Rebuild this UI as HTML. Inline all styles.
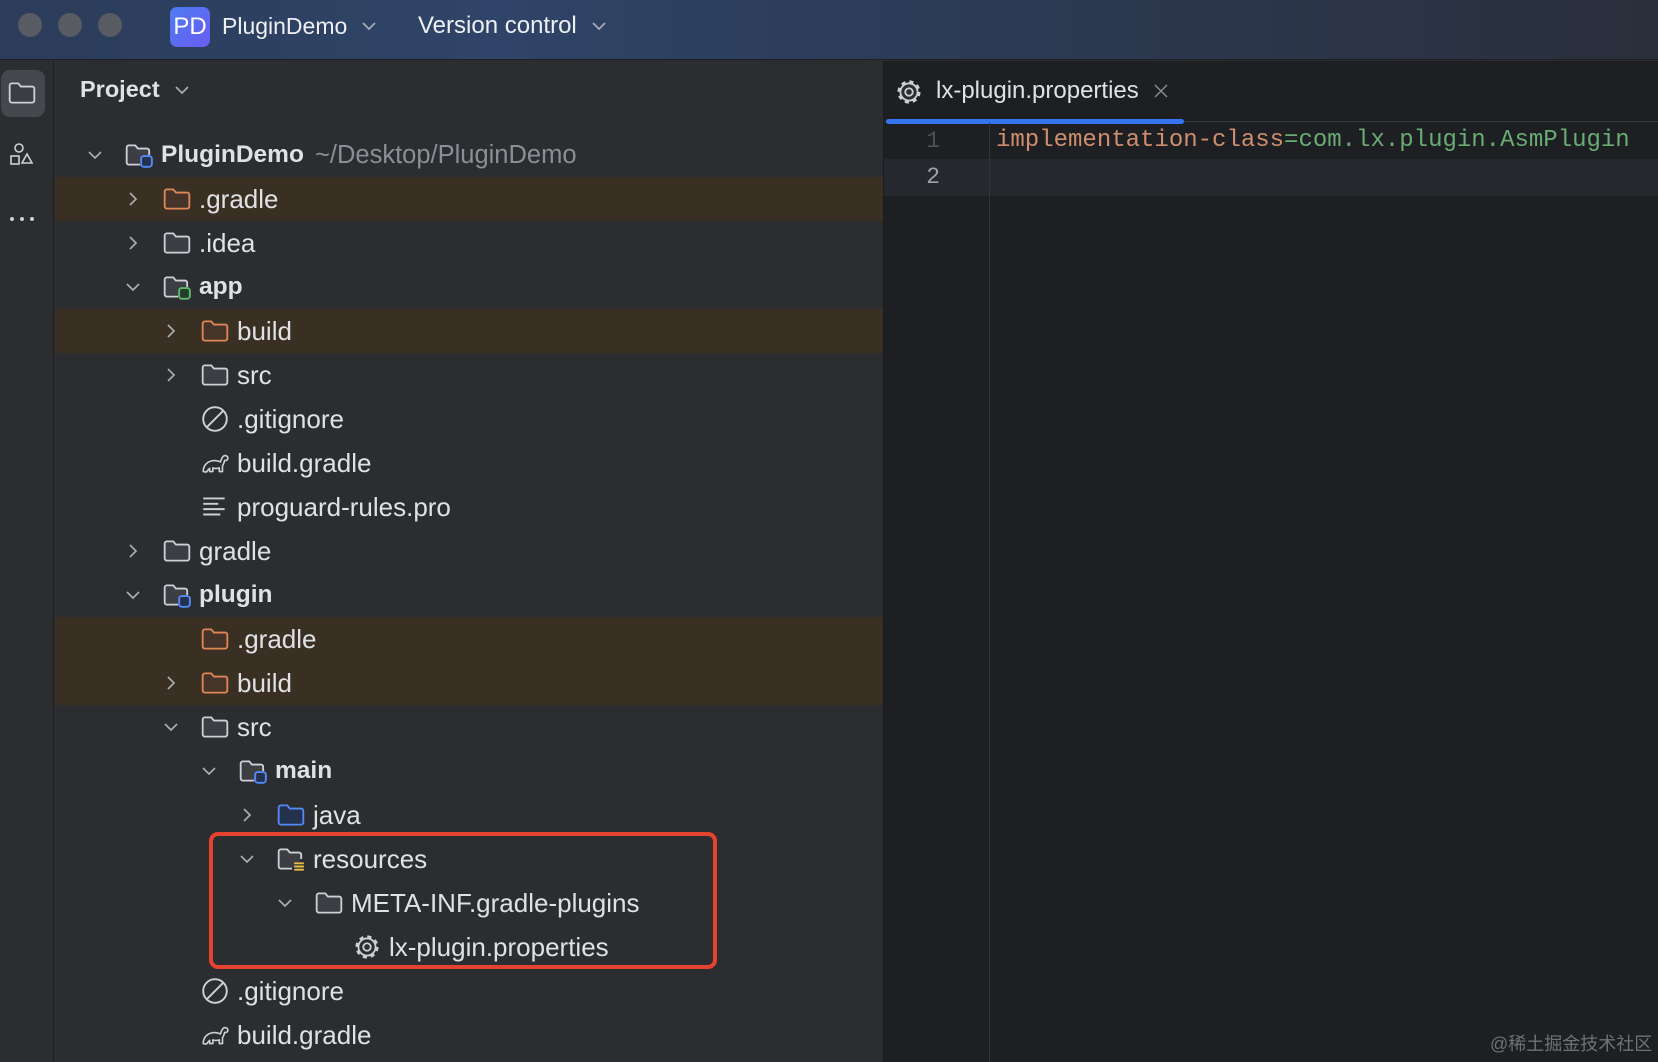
<!DOCTYPE html>
<html><head><meta charset="utf-8">
<style>
*{margin:0;padding:0;box-sizing:border-box}
body{width:1658px;height:1062px;overflow:hidden;background:#2b2d30;font-family:"Liberation Sans",sans-serif;position:relative;color:#dfe1e5}
.title{position:absolute;left:0;top:0;width:1658px;height:60px;background:linear-gradient(90deg,#2c3c5a 0%,#2f4468 30%,#2c3a54 60%,#2a2f3b 100%);border-bottom:1px solid #1e1f22}
.tl{position:absolute;top:13px;width:24px;height:24px;border-radius:50%;background:#585b61}
.strip{position:absolute;left:0;top:61px;width:54px;height:1001px;background:#2b2d30;border-right:1px solid #1e1f22}
.panel{position:absolute;left:55px;top:61px;width:828px;height:1001px;background:#2b2d30}
.editor{position:absolute;left:883px;top:61px;width:775px;height:1001px;background:#1e1f22;border-left:1px solid #1a1b1d}
.row{position:absolute;left:55px;width:828px;height:44px}
.row.o{background:#3a2f23}
.row svg{position:absolute}
.row .c{top:13px;width:18px;height:18px}
.row .i{top:7px;width:30px;height:30px}
.row span{position:absolute;top:0;line-height:44px;font-size:26px;color:#dfe1e5;white-space:nowrap}
.row span.b{font-weight:bold;font-size:24.5px}
</style></head><body>
<svg width="0" height="0" style="position:absolute">
<defs>
<symbol id="cd" viewBox="0 0 18 18"><path d="M3 6l6 6 6-6" fill="none" stroke="#a8abb2" stroke-width="1.7"/></symbol>
<symbol id="cr" viewBox="0 0 18 18"><path d="M6 3l6 6-6 6" fill="none" stroke="#a8abb2" stroke-width="1.7"/></symbol>
<symbol id="fg" viewBox="0 0 28 28"><path d="M2.5 7a2 2 0 0 1 2-2h6l2.5 3h10.5a2 2 0 0 1 2 2v11a2 2 0 0 1-2 2h-19a2 2 0 0 1-2-2z" fill="#3c3e43" stroke="#ced0d6" stroke-width="1.7"/></symbol>
<symbol id="fo" viewBox="0 0 28 28"><path d="M2.5 7a2 2 0 0 1 2-2h6l2.5 3h10.5a2 2 0 0 1 2 2v11a2 2 0 0 1-2 2h-19a2 2 0 0 1-2-2z" fill="#45342a" stroke="#e08855" stroke-width="1.7"/></symbol>
<symbol id="fb" viewBox="0 0 28 28"><path d="M2.5 7a2 2 0 0 1 2-2h6l2.5 3h10.5a2 2 0 0 1 2 2v11a2 2 0 0 1-2 2h-19a2 2 0 0 1-2-2z" fill="#25324d" stroke="#548af7" stroke-width="1.7"/></symbol>
<symbol id="mb" viewBox="0 0 28 28"><path d="M15 23H4.5a2 2 0 0 1-2-2V7a2 2 0 0 1 2-2h6l2.5 3h8.5a2 2 0 0 1 2 2v4" fill="#3c3e43" stroke="#ced0d6" stroke-width="1.7"/><rect x="16" y="15" width="10" height="10" rx="2.5" fill="#25324d" stroke="#548af7" stroke-width="1.8"/></symbol>
<symbol id="mg" viewBox="0 0 28 28"><path d="M15 23H4.5a2 2 0 0 1-2-2V7a2 2 0 0 1 2-2h6l2.5 3h8.5a2 2 0 0 1 2 2v4" fill="#3c3e43" stroke="#ced0d6" stroke-width="1.7"/><rect x="16" y="15" width="10" height="10" rx="2.5" fill="#253c30" stroke="#5fb865" stroke-width="1.8"/></symbol>
<symbol id="mr" viewBox="0 0 28 28"><path d="M15 23H4.5a2 2 0 0 1-2-2V7a2 2 0 0 1 2-2h6l2.5 3h8.5a2 2 0 0 1 2 2v4" fill="#3c3e43" stroke="#ced0d6" stroke-width="1.7"/><path d="M17 18h9M17 21h9M17 24h9" stroke="#e8c046" stroke-width="1.8"/></symbol>
<symbol id="gi" viewBox="0 0 28 28"><circle cx="14" cy="14" r="11" fill="none" stroke="#ced0d6" stroke-width="1.8"/><path d="M6.5 21.5l15-15" stroke="#ced0d6" stroke-width="1.8"/></symbol>
<symbol id="gr" viewBox="0 0 28 28"><path d="M3 22c0-5 3-9 8-10 3-.6 6 0 8 1 1-2 1-4 3-5.5 1.5-1 4 0 4 2 0 2-2 2.5-3 2-.5 2-1 4-2 5v5.5h-3v-3.5c-2 .8-4 .8-6 0v3.5H9v-3c-1 1-2 2-3 3.5z" fill="none" stroke="#ced0d6" stroke-width="1.5" stroke-linejoin="round"/></symbol>
<symbol id="pr" viewBox="0 0 28 28"><path d="M3 6h20M3 11h14M3 16h20M3 21h16" stroke="#ced0d6" stroke-width="1.8"/></symbol>
<symbol id="ge" viewBox="0 0 28 28"><circle cx="14" cy="14" r="9" fill="none" stroke="#ced0d6" stroke-width="3.6" stroke-dasharray="3.6 3.47"/><circle cx="14" cy="14" r="8" fill="#2b2d30" stroke="#ced0d6" stroke-width="1.7"/><circle cx="14" cy="14" r="3.5" fill="none" stroke="#ced0d6" stroke-width="1.7"/></symbol>
</defs></svg>

<div class="title">
<div class="tl" style="left:18px"></div><div class="tl" style="left:58px"></div><div class="tl" style="left:98px"></div>
<div style="position:absolute;left:170px;top:7px;width:40px;height:40px;border-radius:7px;background:linear-gradient(135deg,#4c7cf3,#6b5cf0);color:#fff;font-size:24px;line-height:40px;text-align:center">PD</div>
<div style="position:absolute;left:222px;top:0;line-height:52px;font-size:23px;color:#eef0f4">PluginDemo</div>
<svg style="position:absolute;left:360px;top:17px" width="18" height="18"><use href="#cd"/></svg>
<div style="position:absolute;left:418px;top:0;line-height:52px;font-size:24px;color:#eef0f4">Version control</div>
<svg style="position:absolute;left:590px;top:17px" width="18" height="18"><use href="#cd"/></svg>
</div>

<div class="strip">
<div style="position:absolute;left:1px;top:9px;width:44px;height:47px;border-radius:9px;background:#45474c"></div>
<svg style="position:absolute;left:7px;top:17px" width="30" height="30"><use href="#fg"/></svg>
<svg style="position:absolute;left:8px;top:80px" width="28" height="28" viewBox="0 0 28 28"><circle cx="11" cy="7" r="4" fill="none" stroke="#ced0d6" stroke-width="1.6"/><rect x="3" y="15" width="8" height="8" fill="none" stroke="#ced0d6" stroke-width="1.6"/><path d="M19 13l5 9h-10z" fill="none" stroke="#ced0d6" stroke-width="1.6"/></svg>
<div style="position:absolute;left:10px;top:156px;width:4px;height:4px;border-radius:50%;background:#ced0d6;box-shadow:10px 0 #ced0d6,20px 0 #ced0d6"></div>
</div>

<div class="panel">
<div style="position:absolute;left:25px;top:15px;font-size:23.5px;font-weight:bold;color:#dfe1e5">Project</div>
<svg style="position:absolute;left:118px;top:20px" width="18" height="18"><use href="#cd"/></svg>
</div>

<div class="row" style="top:133px"><svg class="c" style="left:31px"><use href="#cd"/></svg><svg class="i" style="left:69px"><use href="#mb"/></svg><span class="b" style="left:106px">PluginDemo</span><span style="left:260px;color:#8b8e94;font-size:25.5px">~/Desktop/PluginDemo</span></div>
<div class="row o" style="top:177px"><svg class="c" style="left:69px"><use href="#cr"/></svg><svg class="i" style="left:107px"><use href="#fo"/></svg><span style="left:144px">.gradle</span></div>
<div class="row" style="top:221px"><svg class="c" style="left:69px"><use href="#cr"/></svg><svg class="i" style="left:107px"><use href="#fg"/></svg><span style="left:144px">.idea</span></div>
<div class="row" style="top:265px"><svg class="c" style="left:69px"><use href="#cd"/></svg><svg class="i" style="left:107px"><use href="#mg"/></svg><span class="b" style="left:144px">app</span></div>
<div class="row o" style="top:309px"><svg class="c" style="left:107px"><use href="#cr"/></svg><svg class="i" style="left:145px"><use href="#fo"/></svg><span style="left:182px">build</span></div>
<div class="row" style="top:353px"><svg class="c" style="left:107px"><use href="#cr"/></svg><svg class="i" style="left:145px"><use href="#fg"/></svg><span style="left:182px">src</span></div>
<div class="row" style="top:397px"><svg class="i" style="left:145px"><use href="#gi"/></svg><span style="left:182px">.gitignore</span></div>
<div class="row" style="top:441px"><svg class="i" style="left:145px"><use href="#gr"/></svg><span style="left:182px">build.gradle</span></div>
<div class="row" style="top:485px"><svg class="i" style="left:145px"><use href="#pr"/></svg><span style="left:182px">proguard-rules.pro</span></div>
<div class="row" style="top:529px"><svg class="c" style="left:69px"><use href="#cr"/></svg><svg class="i" style="left:107px"><use href="#fg"/></svg><span style="left:144px">gradle</span></div>
<div class="row" style="top:573px"><svg class="c" style="left:69px"><use href="#cd"/></svg><svg class="i" style="left:107px"><use href="#mb"/></svg><span class="b" style="left:144px">plugin</span></div>
<div class="row o" style="top:617px"><svg class="i" style="left:145px"><use href="#fo"/></svg><span style="left:182px">.gradle</span></div>
<div class="row o" style="top:661px"><svg class="c" style="left:107px"><use href="#cr"/></svg><svg class="i" style="left:145px"><use href="#fo"/></svg><span style="left:182px">build</span></div>
<div class="row" style="top:705px"><svg class="c" style="left:107px"><use href="#cd"/></svg><svg class="i" style="left:145px"><use href="#fg"/></svg><span style="left:182px">src</span></div>
<div class="row" style="top:749px"><svg class="c" style="left:145px"><use href="#cd"/></svg><svg class="i" style="left:183px"><use href="#mb"/></svg><span class="b" style="left:220px">main</span></div>
<div class="row" style="top:793px"><svg class="c" style="left:183px"><use href="#cr"/></svg><svg class="i" style="left:221px"><use href="#fb"/></svg><span style="left:258px">java</span></div>
<div class="row" style="top:837px"><svg class="c" style="left:183px"><use href="#cd"/></svg><svg class="i" style="left:221px"><use href="#mr"/></svg><span style="left:258px">resources</span></div>
<div class="row" style="top:881px"><svg class="c" style="left:221px"><use href="#cd"/></svg><svg class="i" style="left:259px"><use href="#fg"/></svg><span style="left:296px">META-INF.gradle-plugins</span></div>
<div class="row" style="top:925px"><svg class="i" style="left:297px"><use href="#ge"/></svg><span style="left:334px">lx-plugin.properties</span></div>
<div class="row" style="top:969px"><svg class="i" style="left:145px"><use href="#gi"/></svg><span style="left:182px">.gitignore</span></div>
<div class="row" style="top:1013px"><svg class="i" style="left:145px"><use href="#gr"/></svg><span style="left:182px">build.gradle</span></div>

<div style="position:absolute;left:209px;top:832px;width:508px;height:137px;border:4px solid #e5432f;border-radius:9px"></div>

<div class="editor">
<div style="position:absolute;left:0;top:0;width:775px;height:61px;background:#1e1f22"></div>
<svg style="position:absolute;left:10px;top:16px" width="30" height="30"><use href="#ge"/></svg>
<div style="position:absolute;left:52px;top:0;line-height:60px;font-size:24px;color:#dfe1e5">lx-plugin.properties</div>
<svg style="position:absolute;left:268px;top:21px" width="18" height="18" viewBox="0 0 18 18"><path d="M3 3l12 12M15 3L3 15" stroke="#868a91" stroke-width="1.5"/></svg>
<div style="position:absolute;left:0;top:60px;width:775px;height:1px;background:#393b40"></div>
<div style="position:absolute;left:2px;top:58px;width:298px;height:5px;border-radius:3px;background:#3574f0"></div>
<div style="position:absolute;left:0;top:98px;width:775px;height:37px;background:#26282e"></div>
<div style="position:absolute;left:105px;top:62px;width:1px;height:939px;background:#313438"></div>
<div style="position:absolute;left:0;top:62px;width:56px;line-height:36px;text-align:right;font-family:'Liberation Mono',monospace;font-size:23px;color:#4b5059">1</div>
<div style="position:absolute;left:0;top:98px;width:56px;line-height:37px;text-align:right;font-family:'Liberation Mono',monospace;font-size:23px;color:#a1a3ab">2</div>
<div style="position:absolute;left:112px;top:62px;line-height:36px;font-family:'Liberation Mono',monospace;font-size:24px;white-space:nowrap"><span style="color:#cf8e6d">implementation-class</span><span style="color:#6aab73">=com.lx.plugin.AsmPlugin</span></div>
</div>

<div style="position:absolute;left:1490px;top:1030px;font-size:18px;color:#6f7177;font-family:'Liberation Sans','Noto Sans CJK SC',sans-serif;white-space:nowrap">@稀土掘金技术社区</div>
</body></html>
